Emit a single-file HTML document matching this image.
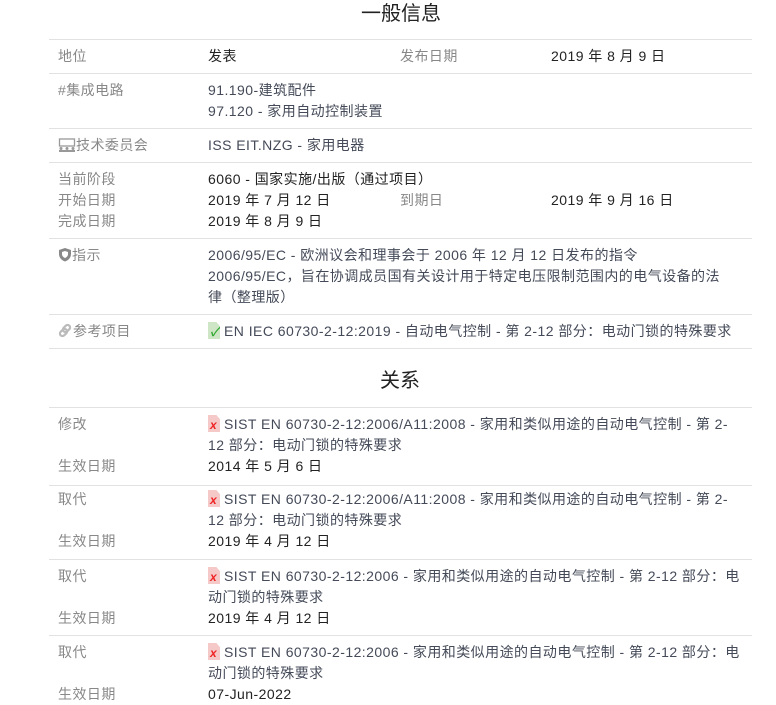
<!DOCTYPE html>
<html><head><meta charset="utf-8"><style>
*{margin:0;padding:0;box-sizing:border-box}
body{width:776px;height:705px;background:#fff;font-family:"Liberation Sans","Noto Sans CJK SC",sans-serif;font-size:14px;position:relative;overflow:hidden;color:#333}
.t{position:absolute;white-space:nowrap;line-height:21px;letter-spacing:0.45px;margin-top:1px}
.h{position:absolute;font-size:20px;color:#222;line-height:24px}
.b{position:absolute;left:49px;width:703px;height:1px;background:#e2e2e2}
.l{color:#888}
.v{color:#444a58}
.d{color:#222}
.ic{display:inline-block;width:12px;height:17px;vertical-align:-3px;margin-right:4px;position:relative;clip-path:polygon(0 0,70% 0,100% 25%,100% 100%,0 100%)}
.ok{background:#cfe6c6}.bad{background:#f6c9c9}
.ic span{position:absolute;left:2px;top:3px;font-size:12px;line-height:14px;font-weight:bold}
</style></head><body>
<div class="h" style="left:361px;top:2px">一般信息</div>
<div class="b" style="top:39px"></div>
<div class="t l" style="left:58px;top:45px">地位</div>
<div class="t d" style="left:208px;top:45px">发表</div>
<div class="t l" style="left:400px;top:45px">发布日期</div>
<div class="t d" style="left:551px;top:45px">2019 年 8 月 9 日</div>
<div class="b" style="top:73px"></div>
<div class="t l" style="left:58px;top:79px">#集成电路</div>
<div class="t v" style="left:208px;top:79px">91.190-建筑配件<br>97.120 - 家用自动控制装置</div>
<div class="b" style="top:128px"></div>
<div class="t l" style="left:58px;top:134px"><svg width="18" height="14" viewBox="0 0 18 14" style="vertical-align:-2px"><rect x="1.5" y="1" width="15" height="7" fill="none" stroke="#999" stroke-width="1.3"/><circle cx="3" cy="10.5" r="1.5" fill="#999"/><circle cx="9" cy="10.5" r="1.5" fill="#999"/><circle cx="15" cy="10.5" r="1.5" fill="#999"/><rect x="1" y="12" width="16" height="2" fill="#999"/></svg>技术委员会</div>
<div class="t v" style="left:208px;top:134px">ISS EIT.NZG - 家用电器</div>
<div class="b" style="top:162px"></div>
<div class="t l" style="left:58px;top:168px">当前阶段<br>开始日期<br>完成日期</div>
<div class="t d" style="left:208px;top:168px">6060 - 国家实施/出版（通过项目）<br>2019 年 7 月 12 日<br>2019 年 8 月 9 日</div>
<div class="t l" style="left:400px;top:189px">到期日</div>
<div class="t d" style="left:551px;top:189px">2019 年 9 月 16 日</div>
<div class="b" style="top:238px"></div>
<div class="t l" style="left:58px;top:244px"><svg width="14" height="15" viewBox="0 0 14 15" style="vertical-align:-2px"><path d="M7 1L1 3v4c0 4 3 6.5 6 7.5 3-1 6-3.5 6-7.5V3z" fill="#888"/><path d="M7 4L4 5v2c0 2 1.5 3.3 3 4 1.5-.7 3-2 3-4V5z" fill="#fff"/></svg>指示</div>
<div class="t v" style="left:208px;top:244px">2006/95/EC - 欧洲议会和理事会于 2006 年 12 月 12 日发布的指令<br>2006/95/EC，旨在协调成员国有关设计用于特定电压限制范围内的电气设备的法<br>律（整理版）</div>
<div class="b" style="top:314px"></div>
<div class="t l" style="left:58px;top:320px"><svg width="15" height="15" viewBox="0 0 15 15" style="vertical-align:-2px"><g fill="none" stroke="#bbb" stroke-width="2.2"><rect x="6" y="1.5" width="5" height="8" rx="2.5" transform="rotate(45 8.5 5.5)"/><rect x="3" y="5.5" width="5" height="8" rx="2.5" transform="rotate(45 5.5 9.5)"/></g></svg>参考项目</div>
<div class="t v" style="left:208px;top:320px"><i class="ic ok"><span style="color:#3a3">✓</span></i>EN IEC 60730-2-12:2019 - 自动电气控制 - 第 2-12 部分：电动门锁的特殊要求</div>
<div class="b" style="top:348px"></div>
<div class="h" style="left:380px;top:369px">关系</div>
<div class="b" style="top:407px"></div>
<div class="t l" style="left:58px;top:413px">修改<br><br>生效日期</div>
<div class="t v" style="left:208px;top:413px"><i class="ic bad"><span style="color:#e22">x</span></i>SIST EN 60730-2-12:2006/A11:2008 - 家用和类似用途的自动电气控制 - 第 2-<br>12 部分：电动门锁的特殊要求<br><span class="d">2014 年 5 月 6 日</span></div>
<div class="b" style="top:485px"></div>
<div class="t l" style="left:58px;top:488px">取代<br><br>生效日期</div>
<div class="t v" style="left:208px;top:488px"><i class="ic bad"><span style="color:#e22">x</span></i>SIST EN 60730-2-12:2006/A11:2008 - 家用和类似用途的自动电气控制 - 第 2-<br>12 部分：电动门锁的特殊要求<br><span class="d">2019 年 4 月 12 日</span></div>
<div class="b" style="top:559px"></div>
<div class="t l" style="left:58px;top:565px">取代<br><br>生效日期</div>
<div class="t v" style="left:208px;top:565px"><i class="ic bad"><span style="color:#e22">x</span></i>SIST EN 60730-2-12:2006 - 家用和类似用途的自动电气控制 - 第 2-12 部分：电<br>动门锁的特殊要求<br><span class="d">2019 年 4 月 12 日</span></div>
<div class="b" style="top:635px"></div>
<div class="t l" style="left:58px;top:641px">取代<br><br>生效日期</div>
<div class="t v" style="left:208px;top:641px"><i class="ic bad"><span style="color:#e22">x</span></i>SIST EN 60730-2-12:2006 - 家用和类似用途的自动电气控制 - 第 2-12 部分：电<br>动门锁的特殊要求<br><span class="d">07-Jun-2022</span></div>
</body></html>
